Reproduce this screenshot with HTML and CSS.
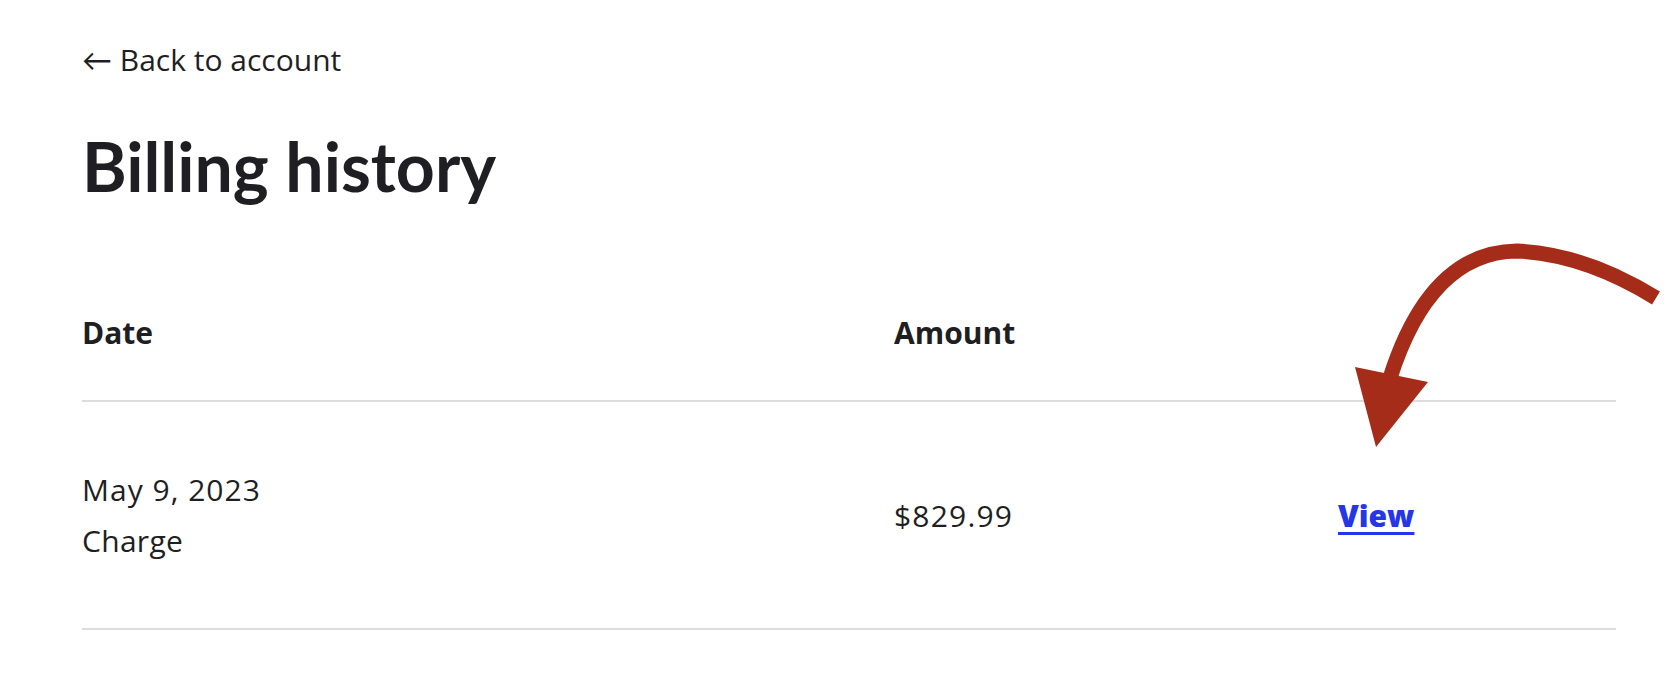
FILE: index.html
```html
<!DOCTYPE html>
<html lang="en">
<head>
<meta charset="utf-8">
<title>Billing history</title>
<link rel="stylesheet" href="styles.css">
</head>
<body>
<main class="page">
  <a class="back-link" href="#">← Back to account</a>
  <h1 class="title">Billing history</h1>
  <section class="billing">
    <div class="row head">
      <div class="cell">Date</div>
      <div class="cell">Amount</div>
      <div class="cell"></div>
    </div>
    <div class="row item">
      <div class="cell date">
        <div>May 9, 2023</div>
        <div class="kind">Charge</div>
      </div>
      <div class="cell amount">$829.99</div>
      <div class="cell"><a class="view-link" href="#">View</a></div>
    </div>
  </section>
</main>
<svg class="annotation" width="1674" height="674" viewBox="0 0 1674 674" aria-hidden="true">
  <path d="M1656 298 Q1585 254 1517 251 Q1430 252 1390 378" fill="none" stroke="#a62c1a" stroke-width="15"/>
  <polygon points="1355,367 1428,382 1376,447" fill="#a62c1a"/>
</svg>
</body>
</html>
```
FILE: styles.css
```css
html, body {
  margin: 0;
  padding: 0;
  background: #ffffff;
}
body {
  position: relative;
  width: 1674px;
  height: 674px;
  overflow: hidden;
  font-family: "Open Sans", "Lato", sans-serif;
  color: #1f1f23;
}
.page {
  padding: 40px 58px 0 82px;
}
.back-link {
  display: block;
  font-size: 30px;
  line-height: 40px;
  color: #1f1f23;
  text-decoration: none;
}
.title {
  margin: 46px 0 0;
  font-family: "Lato", "Open Sans", sans-serif;
  font-size: 68px;
  line-height: 80px;
  font-weight: 700;
}
.billing {
  margin-top: 106px;
}
.row {
  display: grid;
  grid-template-columns: 812px 444px 1fr;
  border-bottom: 2px solid #dcdcdc;
  font-size: 30px;
}
.row.head {
  font-weight: 700;
  height: 88px;
}
.row.item {
  height: 226px;
  align-items: center;
}
.cell.date {
  display: flex;
  flex-direction: column;
  gap: 11px;
  line-height: 40px;
  letter-spacing: 1px;
}
.cell.date .kind {
  letter-spacing: 0.3px;
}
.cell.amount {
  letter-spacing: 1.2px;
}
.view-link {
  color: #2436e8;
  font-weight: 800;
  text-decoration: underline;
  text-decoration-thickness: 3px;
  text-underline-offset: 5px;
}
.annotation {
  position: absolute;
  left: 0;
  top: 0;
  pointer-events: none;
}
```
